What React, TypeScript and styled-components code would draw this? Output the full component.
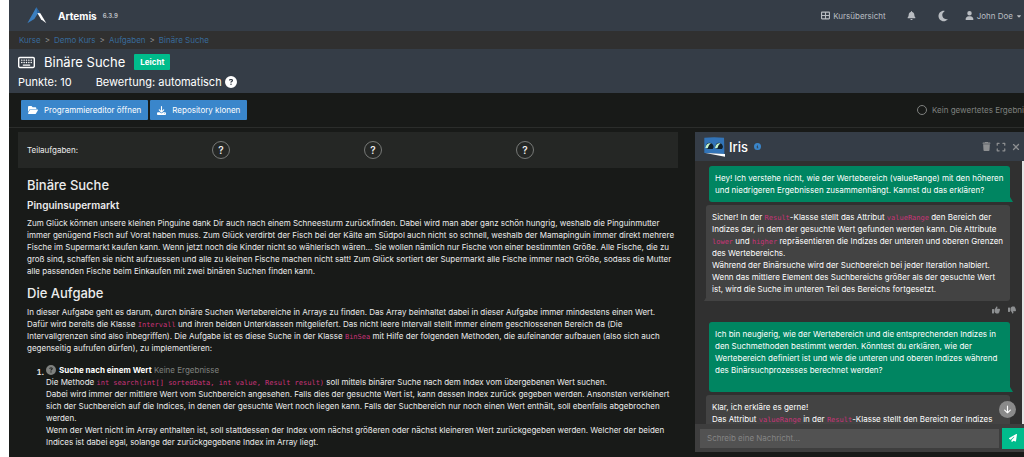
import React from 'react';
import styled, { createGlobalStyle, css } from 'styled-components';
import {
  FaArrowDown, FaBell, FaCaretDown, FaCircleInfo, FaCircleQuestion, FaDownload, FaExpand,
  FaFolderOpen, FaMoon, FaPaperPlane, FaRegKeyboard, FaTableCellsLarge, FaThumbsDown,
  FaThumbsUp, FaTrash, FaUser, FaXmark,
} from 'react-icons/fa6';

const color = {
  bar: '#353d47',
  page: '#181a18',
  panel: '#303030',
  line: '#2b2d2b',
  text: '#ececec',
  muted: '#7f817f',
  link: '#386a9a',
  blue: '#3a86cb',
  green: '#00bc8c',
  code: '#c93378',
};

const Global = createGlobalStyle`
  * { box-sizing: border-box; }
  body {
    margin: 0;
    background: #fff;
    font-family: Inter, "Liberation Sans", sans-serif;
    font-size: 8px;
    line-height: 12px;
    color: ${color.text};
  }
  h1, h2, h3, p, ol { margin: 0; }
  button, input { font-family: inherit; }
  svg { display: block; flex: none; }
`;

const Page = styled.div`
  margin-left: 9px;
  min-height: 100vh;
  background: ${color.page};
  overflow: hidden;
  display: flex;
  flex-direction: column;
`;

const Navbar = styled.header`
  height: 31px;
  padding: 0 2px 0 18px;
  background: ${color.bar};
  display: flex;
  align-items: center;
  justify-content: space-between;
`;

const Brand = styled.a`
  display: flex;
  align-items: center;
  color: #fff;
  font-size: 10px;
  font-weight: 700;
  text-decoration: none;
`;

const BrandName = styled.span`
  margin-left: 11px;
`;

const Version = styled.small`
  margin-left: 6px;
  font-size: 6px;
  color: #b5babf;
`;

const Menu = styled.nav`
  display: flex;
  align-items: center;
`;

const MenuItem = styled.a`
  margin-left: 17px;
  display: flex;
  align-items: center;
  gap: 3px;
  color: #b9bdc2;
  text-decoration: none;
`;

const IconButton = styled.button<{ $color?: string }>`
  padding: 0;
  border: 0;
  background: none;
  color: ${(p) => p.$color ?? '#8d8f91'};
  display: flex;
`;

const MenuButton = styled(IconButton)`
  margin-left: 21px;
  width: 10px;
  justify-content: center;
`;

const Crumbs = styled.nav`
  height: 18px;
  padding: 0 10px;
  background: ${color.panel};
  display: flex;
  align-items: center;
  gap: 4px;
  color: #999;
`;

const Crumb = styled.a`
  color: ${color.link};
  text-decoration: none;
`;

const TitleBar = styled.section`
  height: 44px;
  padding: 4px 9px;
  background: ${color.bar};
  color: #fff;
`;

const TitleRow = styled.div`
  height: 18px;
  display: flex;
  align-items: center;
  gap: 9px;
`;

const Title = styled.h1`
  font-size: 13px;
  font-weight: 400;
`;

const Badge = styled.span`
  padding: 0 6px;
  border-radius: 1px;
  background: ${color.green};
  font-weight: 700;
  line-height: 16px;
`;

const Facts = styled.div`
  height: 22px;
  display: flex;
  align-items: center;
  gap: 24px;
  font-size: 11px;
`;

const Fact = styled.span`
  display: flex;
  align-items: center;
  gap: 3px;
`;

const ActionBar = styled.section`
  height: 35px;
  padding-left: 12px;
  border-bottom: 1px solid ${color.line};
  display: flex;
  align-items: center;
  gap: 2px;
  white-space: nowrap;
`;

const Action = styled.button`
  height: 20px;
  padding: 0 7px;
  border: 0;
  border-radius: 1px;
  background: ${color.blue};
  color: #fff;
  font-size: 8px;
  display: flex;
  align-items: center;
  gap: 6px;
`;

const ResultState = styled.span`
  width: 107px;
  margin-left: auto;
  display: flex;
  align-items: center;
  gap: 5px;
  color: ${color.muted};
  overflow: hidden;
`;

const Ring = styled.span`
  flex: none;
  width: 10px;
  height: 10px;
  border: 1px solid ${color.muted};
  border-radius: 50%;
`;

const Columns = styled.div`
  flex: 1;
  display: grid;
  grid-template-columns: minmax(0, 1fr) 329px;
  column-gap: 17px;
  padding: 4px 0 5px 9px;
`;

const Steps = styled.section`
  height: 36px;
  padding-left: 9px;
  background: #252725;
  display: flex;
  align-items: center;
`;

const StepsLabel = styled.span`
  width: 185px;
`;

const Step = styled.button`
  width: 18px;
  height: 18px;
  margin-right: 134px;
  padding: 0;
  border: 1px solid #777977;
  border-radius: 50%;
  background: none;
  color: ${color.text};
  font-size: 10px;
  font-weight: 600;
  line-height: 16px;
`;

const Article = styled.article`
  padding: 9px 0 0 9px;
  white-space: nowrap;
`;

const Heading = styled.h2`
  margin-bottom: 5px;
  font-size: 13px;
  font-weight: 500;
  line-height: 16px;
`;

const SubHeading = styled.h3`
  margin-bottom: 5px;
  font-size: 10px;
  font-weight: 600;
  line-height: 14px;
`;

const Paragraph = styled.p`
  margin-bottom: 8px;
`;

const Code = styled.code`
  font-family: "DejaVu Sans Mono", monospace;
  font-size: 7px;
  line-height: 7px;
  color: ${color.code};
`;

const Tasks = styled.ol`
  margin-top: 10px;
  padding-left: 19px;

  li::marker {
    font-weight: 600;
  }
`;

const TaskLine = styled.div`
  display: flex;
  align-items: center;
  gap: 3px;
  color: ${color.muted};
`;

const TaskName = styled.strong`
  color: #fff;
`;

const Chat = styled.aside`
  background: ${color.panel};
  display: flex;
  flex-direction: column;
`;

const ChatHeader = styled.header`
  height: 29px;
  padding: 0 3px 0 9px;
  background: ${color.bar};
  display: flex;
  align-items: center;
  gap: 4px;
`;

const ChatTitle = styled.h2`
  margin-right: 2px;
  font-size: 13px;
  font-weight: 500;
  color: #fff;
`;

const ChatTools = styled.div`
  margin-left: auto;
  display: flex;
  align-items: center;
  gap: 5px;
`;

const Viewport = styled.div`
  position: relative;
  flex: 1 0 263px;
  height: 263px;
  overflow: hidden;
  display: flex;
`;

const Messages = styled.div`
  flex: 1;
  padding: 5px 12px 0 11px;
  white-space: nowrap;
`;

const ScrollTrack = styled.div`
  width: 2px;
  background: #e4e4e4;
`;

const Bubble = styled.div<{ $own?: boolean; $tall?: boolean }>`
  position: relative;
  margin-bottom: 3px;
  border-radius: 3px;
  padding: 6px 6px ${(p) => (p.$tall ? 16 : 6)}px;
  color: #fff;

  &::after {
    content: '';
    position: absolute;
    bottom: 0;
    width: 7px;
    height: 5px;
    background: inherit;
  }

  ${(p) =>
    p.$own
      ? css`
          margin-left: 3px;
          background: #008561;
          &::after {
            right: -3px;
            clip-path: polygon(0 0, 4px 0, 100% 100%, 0 100%);
          }
        `
      : css`
          background: #434343;
          &::after {
            left: -2px;
            clip-path: polygon(3px 0, 100% 0, 100% 100%, 0 100%);
          }
        `}
`;

const Rating = styled.div`
  margin: 5px -6px 8px 0;
  display: flex;
  justify-content: flex-end;
  gap: 8px;
`;

const ToBottom = styled.button`
  position: absolute;
  right: 8px;
  bottom: 6px;
  width: 17px;
  height: 17px;
  padding: 0;
  border: 0;
  border-radius: 50%;
  background: #8a8a8a;
  color: #fff;
  display: grid;
  place-items: center;
`;

const Composer = styled.form`
  height: 28px;
  padding: 0 0 0 5px;
  background: #3e3e3e;
  display: flex;
  align-items: center;
  gap: 3px;
`;

const MessageInput = styled.input`
  flex: 1;
  min-width: 0;
  height: 19px;
  padding: 0 7px;
  border: 0;
  background: #525252;
  color: #fff;
  font-size: 8px;

  &::placeholder {
    color: #858585;
    opacity: 1;
  }
`;

const Send = styled.button`
  width: 22px;
  height: 21px;
  padding: 0;
  border: 0;
  background: ${color.green};
  color: #fff;
  display: grid;
  place-items: center;
`;

function ArtemisLogo() {
  return (
    <svg width="20" height="17" viewBox="0 0 60 51" aria-hidden="true">
      <path d="M28 1 L37 15 L31 22 L22 36 L1 49 Z" fill="#3b7fc0" />
      <path d="M28 1 L40 19 L31 22 Z" fill="#28619c" />
      <path d="M31 18 L40 19 L58 49 L42 37 Z" fill="#fff" />
    </svg>
  );
}

function IrisLogo() {
  return (
    <svg width="21" height="20" viewBox="0 0 63 60" aria-hidden="true">
      <path d="M1 2 Q30 -1 60 2 Q61 26 61 51 L1 48 Z" fill="#3274b8" />
      <path d="M5 30 Q6 17 17 17 Q27 18 29 30 L26 36 H9 Z" fill="#10202c" />
      <path d="M34 30 Q35 17 45 17 Q55 18 57 30 L54 36 H38 Z" fill="#10202c" />
      <path d="M4 33 Q7 16 21 19 Q12 24 11 34 Z" fill="#c4f5cf" />
      <path d="M33 33 Q36 16 50 19 Q41 24 40 34 Z" fill="#c4f5cf" />
      <path d="M4 48 L63 51 L63 59 Z" fill="#fff" />
    </svg>
  );
}

export default function App() {
  return (
    <>
      <Global />
      <Page>
        <Navbar>
          <Brand href="#">
            <ArtemisLogo />
            <BrandName>Artemis</BrandName>
            <Version>6.3.9</Version>
          </Brand>
          <Menu>
            <MenuItem href="#"><FaTableCellsLarge size={9} />Kursübersicht</MenuItem>
            <MenuButton $color="#b9bdc2" aria-label="Benachrichtigungen"><FaBell size={9} /></MenuButton>
            <MenuButton $color="#b9bdc2" aria-label="Farbschema"><FaMoon size={12} /></MenuButton>
            <MenuItem href="#"><FaUser size={9} />John Doe<FaCaretDown size={6} /></MenuItem>
          </Menu>
        </Navbar>

        <Crumbs aria-label="Brotkrumen">
          <Crumb href="#">Kurse</Crumb>&gt;
          <Crumb href="#">Demo Kurs</Crumb>&gt;
          <Crumb href="#">Aufgaben</Crumb>&gt;
          <Crumb href="#">Binäre Suche</Crumb>
        </Crumbs>

        <TitleBar>
          <TitleRow>
            <FaRegKeyboard size={17} />
            <Title>Binäre Suche</Title>
            <Badge>Leicht</Badge>
          </TitleRow>
          <Facts>
            <Fact>Punkte: 10</Fact>
            <Fact>Bewertung: automatisch <FaCircleQuestion size={12} /></Fact>
          </Facts>
        </TitleBar>

        <ActionBar>
          <Action><FaFolderOpen size={10} />Programmiereditor öffnen</Action>
          <Action><FaDownload size={9} />Repository klonen</Action>
          <ResultState><Ring />Kein gewertetes Ergebnis</ResultState>
        </ActionBar>

        <Columns>
          <main>
            <Steps>
              <StepsLabel>Teilaufgaben:</StepsLabel>
              <Step>?</Step>
              <Step>?</Step>
              <Step>?</Step>
            </Steps>
            <Article>
              <Heading>Binäre Suche</Heading>
              <SubHeading>Pinguinsupermarkt</SubHeading>
              <Paragraph>
                Zum Glück können unsere kleinen Pinguine dank Dir auch nach einem Schneesturm zurückfinden. Dabei wird man aber ganz schön hungrig, weshalb die Pinguinmutter<br />
                immer genügend Fisch auf Vorat haben muss. Zum Glück verdirbt der Fisch bei der Kälte am Südpol auch nicht so schnell, weshalb der Mamapinguin immer direkt mehrere<br />
                Fische im Supermarkt kaufen kann. Wenn jetzt noch die Kinder nicht so wählerisch wären... Sie wollen nämlich nur Fische von einer bestimmten Größe. Alle Fische, die zu<br />
                groß sind, schaffen sie nicht aufzuessen und alle zu kleinen Fische machen nicht satt! Zum Glück sortiert der Supermarkt alle Fische immer nach Größe, sodass die Mutter<br />
                alle passenden Fische beim Einkaufen mit zwei binären Suchen finden kann.
              </Paragraph>
              <Heading>Die Aufgabe</Heading>
              <Paragraph>
                In dieser Aufgabe geht es darum, durch binäre Suchen Wertebereiche in Arrays zu finden. Das Array beinhaltet dabei in dieser Aufgabe immer mindestens einen Wert.<br />
                Dafür wird bereits die Klasse <Code>Intervall</Code> und ihren beiden Unterklassen mitgeliefert. Das nicht leere Intervall stellt immer einem geschlossenen Bereich da (Die<br />
                Intervallgrenzen sind also inbegriffen). Die Aufgabe ist es diese Suche in der Klasse <Code>BinSea</Code> mit Hilfe der folgenden Methoden, die aufeinander aufbauen (also sich auch<br />
                gegenseitig aufrufen dürfen), zu implementieren:
              </Paragraph>
              <Tasks>
                <li>
                  <TaskLine>
                    <FaCircleQuestion size={10} />
                    <span><TaskName>Suche nach einem Wert</TaskName> Keine Ergebnisse</span>
                  </TaskLine>
                  Die Methode <Code>int search(int[] sortedData, int value, Result result)</Code> soll mittels binärer Suche nach dem Index vom übergebenen Wert suchen.<br />
                  Dabei wird immer der mittlere Wert vom Suchbereich angesehen. Falls dies der gesuchte Wert ist, kann dessen Index zurück gegeben werden. Ansonsten verkleinert<br />
                  sich der Suchbereich auf die Indices, in denen der gesuchte Wert noch liegen kann. Falls der Suchbereich nur noch einen Wert enthält, soll ebenfalls abgebrochen<br />
                  werden.<br />
                  Wenn der Wert nicht im Array enthalten ist, soll stattdessen der Index vom nächst größeren oder nächst kleineren Wert zurückgegeben werden. Welcher der beiden<br />
                  Indices ist dabei egal, solange der zurückgegebene Index im Array liegt.
                </li>
              </Tasks>
            </Article>
          </main>

          <Chat>
            <ChatHeader>
              <IrisLogo />
              <ChatTitle>Iris</ChatTitle>
              <IconButton $color={color.blue} aria-label="Info"><FaCircleInfo size={7} /></IconButton>
              <ChatTools>
                <IconButton aria-label="Verlauf löschen"><FaTrash size={9} /></IconButton>
                <IconButton aria-label="Vergrößern"><FaExpand size={10} /></IconButton>
                <IconButton aria-label="Schließen"><FaXmark size={10} /></IconButton>
              </ChatTools>
            </ChatHeader>
            <Viewport>
              <Messages>
                <Bubble $own>
                  Hey! Ich verstehe nicht, wie der Wertebereich (valueRange) mit den höheren<br />
                  und niedrigeren Ergebnissen zusammenhängt. Kannst du das erklären?
                </Bubble>
                <Bubble>
                  Sicher! In der <Code>Result</Code>-Klasse stellt das Attribut <Code>valueRange</Code> den Bereich der<br />
                  Indizes dar, in dem der gesuchte Wert gefunden werden kann. Die Attribute<br />
                  <Code>lower</Code> und <Code>higher</Code> repräsentieren die Indizes der unteren und oberen Grenzen<br />
                  des Wertebereichs.<br />
                  Während der Binärsuche wird der Suchbereich bei jeder Iteration halbiert.<br />
                  Wenn das mittlere Element des Suchbereichs größer als der gesuchte Wert<br />
                  ist, wird die Suche im unteren Teil des Bereichs fortgesetzt.
                </Bubble>
                <Rating>
                  <IconButton aria-label="Hilfreich"><FaThumbsUp size={8} /></IconButton>
                  <IconButton aria-label="Nicht hilfreich"><FaThumbsDown size={8} /></IconButton>
                </Rating>
                <Bubble $own $tall>
                  Ich bin neugierig, wie der Wertebereich und die entsprechenden Indizes in<br />
                  den Suchmethoden bestimmt werden. Könntest du erklären, wie der<br />
                  Wertebereich definiert ist und wie die unteren und oberen Indizes während<br />
                  des Binärsuchprozesses berechnet werden?
                </Bubble>
                <Bubble>
                  Klar, ich erkläre es gerne!<br />
                  Das Attribut <Code>valueRange</Code> in der <Code>Result</Code>-Klasse stellt den Bereich der Indizes
                </Bubble>
              </Messages>
              <ScrollTrack />
              <ToBottom aria-label="Nach unten"><FaArrowDown size={9} /></ToBottom>
            </Viewport>
            <Composer onSubmit={(e) => e.preventDefault()}>
              <MessageInput aria-label="Nachricht" placeholder="Schreib eine Nachricht..." />
              <Send type="submit" aria-label="Senden"><FaPaperPlane size={8} /></Send>
            </Composer>
          </Chat>
        </Columns>
      </Page>
    </>
  );
}
